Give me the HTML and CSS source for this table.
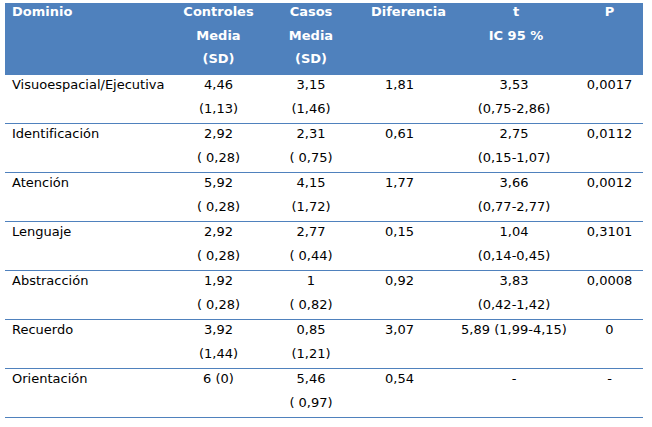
FILE: index.html
```html
<!DOCTYPE html>
<html lang="es">
<head>
<meta charset="utf-8">
<link rel="stylesheet" href="styles.css">
<title>Dominios</title>
</head>
<body>
<div class="wrap">
<table class="stats">
  <colgroup>
    <col class="c-dom"><col class="c-ctl"><col class="c-cas"><col class="c-dif"><col class="c-t"><col class="c-p">
  </colgroup>
  <thead>
    <tr>
      <th class="dom"><div class="in">Dominio</div></th>
      <th><div class="in">Controles<br>Media<br>(SD)</div></th>
      <th><div class="in">Casos<br>Media<br>(SD)</div></th>
      <th><div class="in">Diferencia</div></th>
      <th class="tcol"><div class="in">t<br>IC 95 %</div></th>
      <th class="pcol"><div class="in">P</div></th>
    </tr>
  </thead>
  <tbody>
    <tr>
      <td class="dom"><div class="in">Visuoespacial/Ejecutiva</div></td>
      <td><div class="in">4,46<br>(1,13)</div></td>
      <td><div class="in">3,15<br>(1,46)</div></td>
      <td class="dif"><div class="in">1,81</div></td>
      <td><div class="in">3,53<br>(0,75-2,86)</div></td>
      <td class="pcol"><div class="in">0,0017</div></td>
    </tr>
    <tr>
      <td class="dom"><div class="in">Identificación</div></td>
      <td><div class="in">2,92<br>( 0,28)</div></td>
      <td><div class="in">2,31<br>( 0,75)</div></td>
      <td class="dif"><div class="in">0,61</div></td>
      <td><div class="in">2,75<br>(0,15-1,07)</div></td>
      <td class="pcol"><div class="in">0,0112</div></td>
    </tr>
    <tr>
      <td class="dom"><div class="in">Atención</div></td>
      <td><div class="in">5,92<br>( 0,28)</div></td>
      <td><div class="in">4,15<br>(1,72)</div></td>
      <td class="dif"><div class="in">1,77</div></td>
      <td><div class="in">3,66<br>(0,77-2,77)</div></td>
      <td class="pcol"><div class="in">0,0012</div></td>
    </tr>
    <tr>
      <td class="dom"><div class="in">Lenguaje</div></td>
      <td><div class="in">2,92<br>( 0,28)</div></td>
      <td><div class="in">2,77<br>( 0,44)</div></td>
      <td class="dif"><div class="in">0,15</div></td>
      <td><div class="in">1,04<br>(0,14-0,45)</div></td>
      <td class="pcol"><div class="in">0,3101</div></td>
    </tr>
    <tr>
      <td class="dom"><div class="in">Abstracción</div></td>
      <td><div class="in">1,92<br>( 0,28)</div></td>
      <td><div class="in">1<br>( 0,82)</div></td>
      <td class="dif"><div class="in">0,92</div></td>
      <td><div class="in">3,83<br>(0,42-1,42)</div></td>
      <td class="pcol"><div class="in">0,0008</div></td>
    </tr>
    <tr>
      <td class="dom"><div class="in">Recuerdo</div></td>
      <td><div class="in">3,92<br>(1,44)</div></td>
      <td><div class="in">0,85<br>(1,21)</div></td>
      <td class="dif"><div class="in">3,07</div></td>
      <td><div class="in">5,89 (1,99-4,15)</div></td>
      <td class="pcol"><div class="in">0</div></td>
    </tr>
    <tr>
      <td class="dom"><div class="in">Orientación</div></td>
      <td><div class="in">6 (0)</div></td>
      <td><div class="in">5,46<br>( 0,97)</div></td>
      <td class="dif"><div class="in">0,54</div></td>
      <td><div class="in">-</div></td>
      <td class="pcol"><div class="in">-</div></td>
    </tr>
  </tbody>
</table>
</div>
</body>
</html>
```

FILE: styles.css
```css
html, body {
  margin: 0;
  padding: 0;
  background: #ffffff;
}

.wrap {
  padding: 3px 0 0 5px;
}

.stats {
  width: 638px;
  border-collapse: collapse;
  table-layout: fixed;
  font-family: "DejaVu Sans", Verdana, sans-serif;
  font-size: 13px;
  line-height: 24px;
  color: #000;
}

.c-dom { width: 167px; }
.c-ctl { width: 93px; }
.c-cas { width: 92px; }
.c-dif { width: 103px; }
.c-t { width: 108px; }
.c-p { width: 75px; }

.stats th {
  background: #4f81bd;
  color: #ffffff;
  font-weight: bold;
  text-align: center;
  vertical-align: top;
  padding: 0;
  height: 72px;
  line-height: 23.5px;
}

.stats th .in {
  margin-top: -3px;
}

.stats td {
  text-align: center;
  vertical-align: top;
  padding: 0;
  height: 48px;
  border-bottom: 1px solid #4f81bd;
  white-space: nowrap;
}

.stats td .in {
  margin-top: -2px;
}

.stats .dom {
  text-align: left;
  padding-left: 7px;
}

.stats td.dif {
  text-align: left;
  padding-left: 28px;
}

.stats .tcol {
  padding-left: 4px;
}

.stats .pcol {
  padding-left: 8px;
}
```
